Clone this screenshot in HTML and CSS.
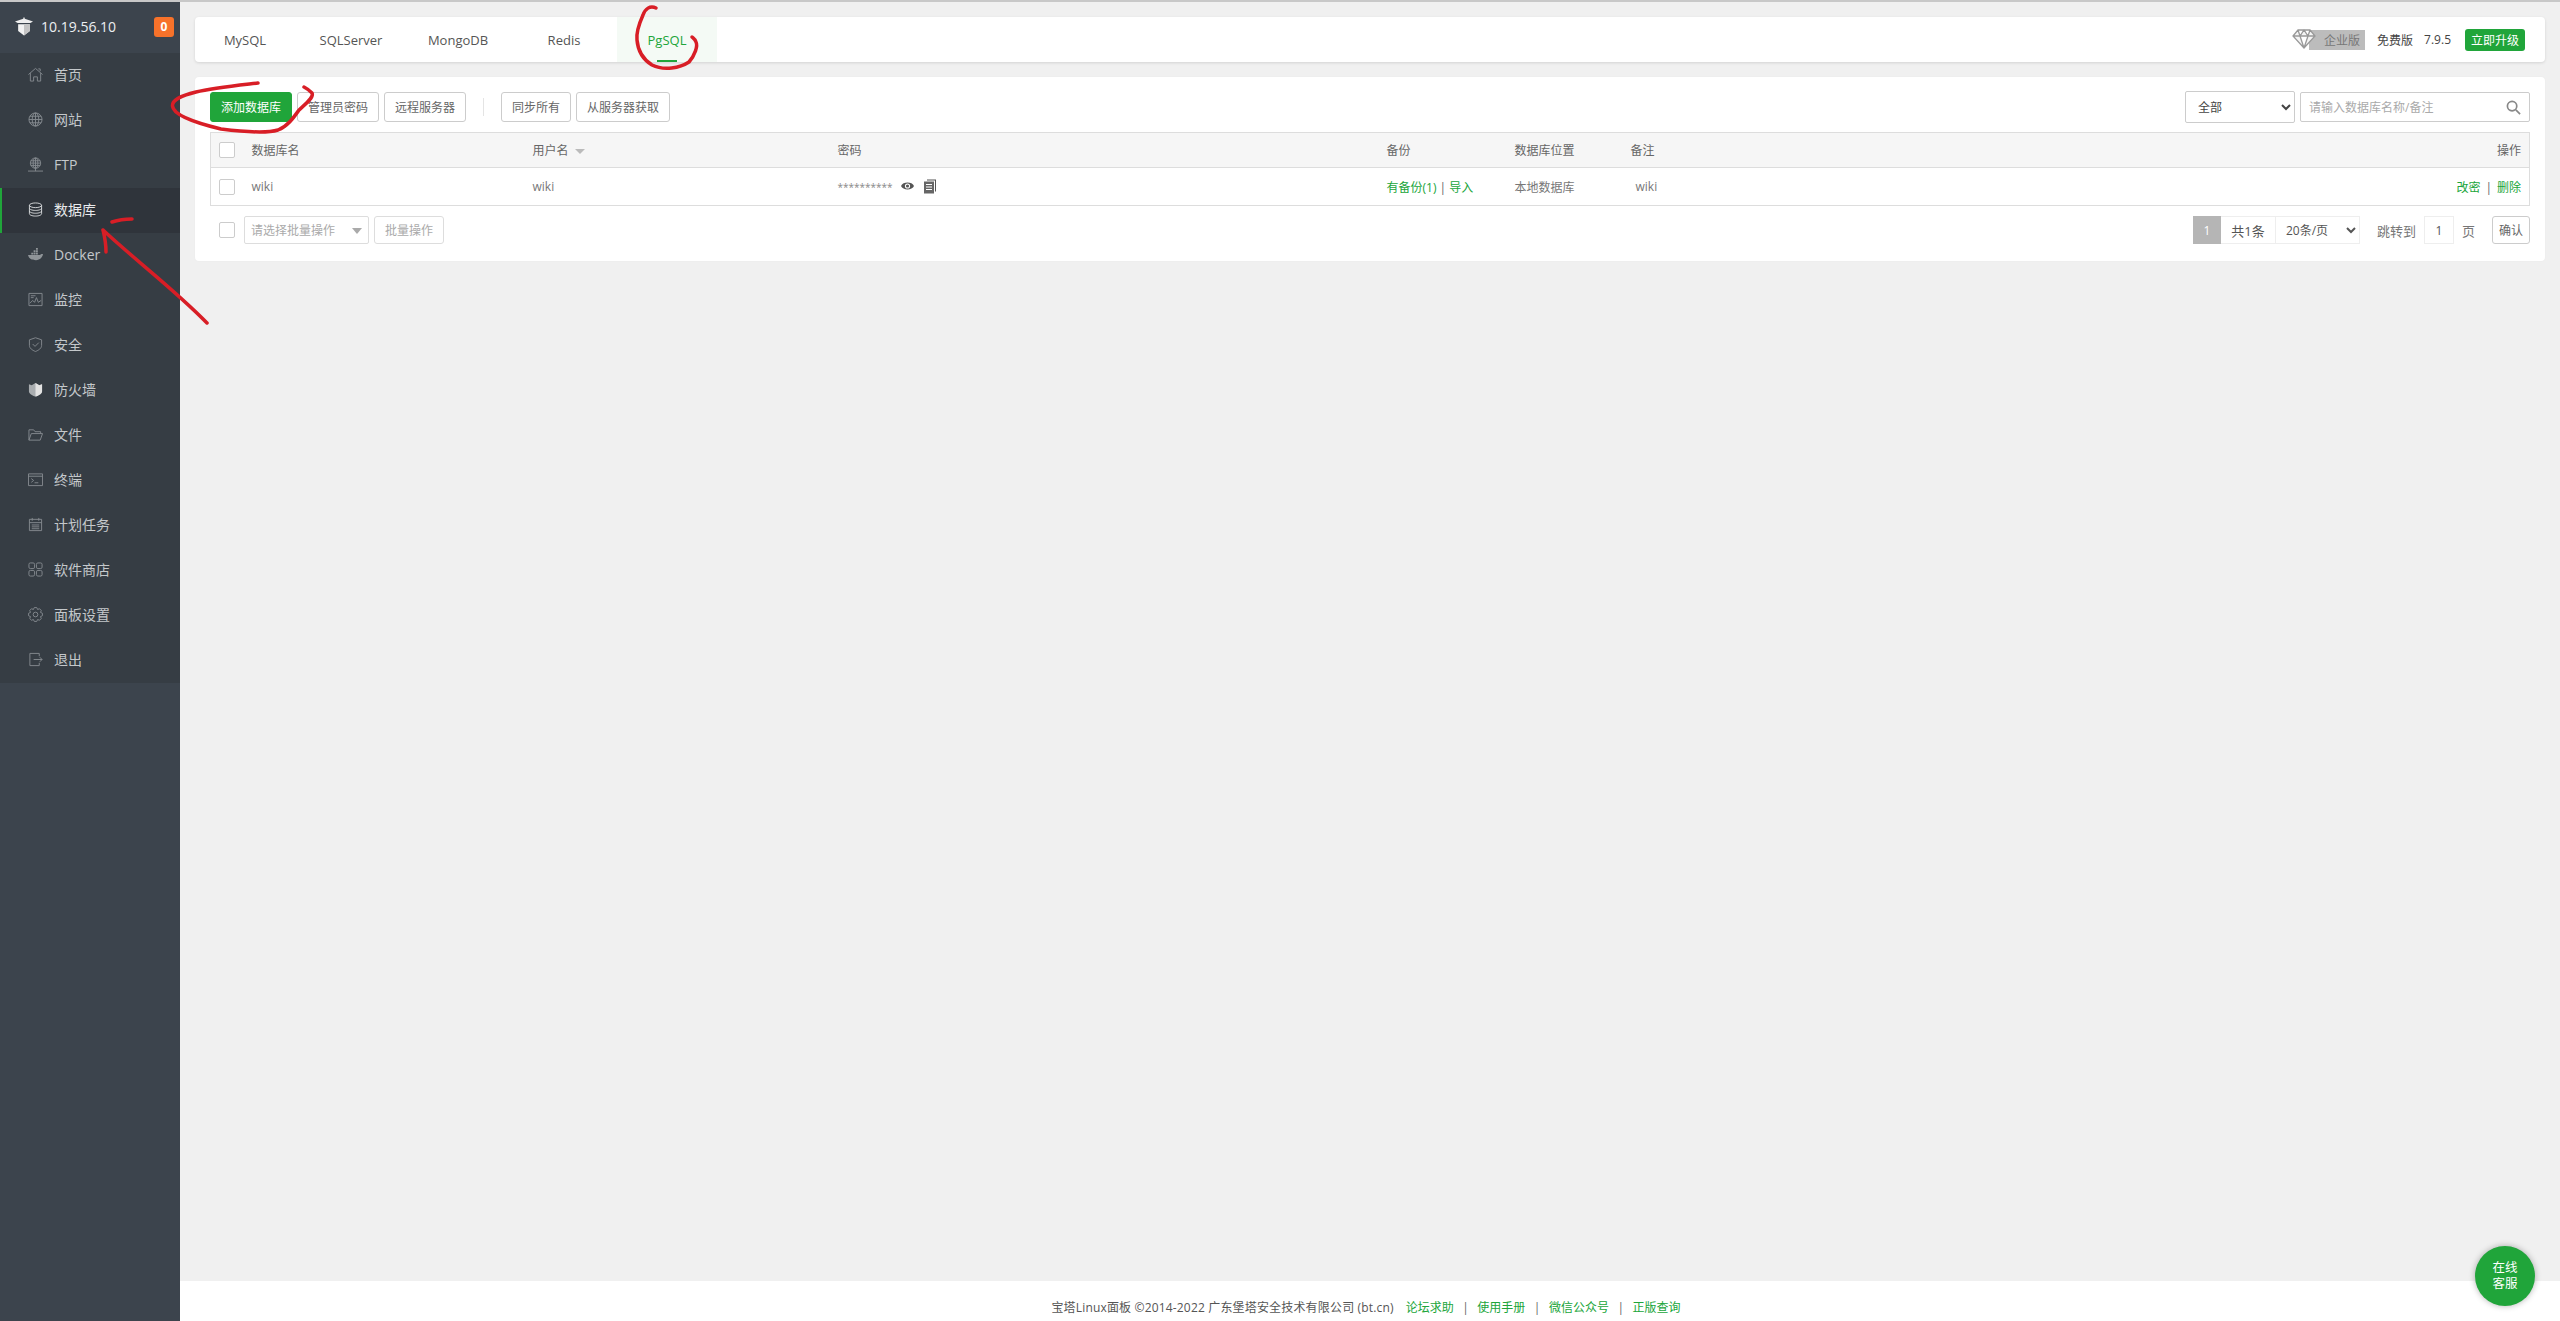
FILE: index.html
```html
<!DOCTYPE html>
<html lang="zh-CN">
<head>
<meta charset="utf-8">
<title>宝塔Linux面板</title>
<link rel="stylesheet" href="styles.css">
</head>
<body>
<div class="app">
  <aside class="sidebar">
    <div class="side-head">
      <svg class="logo" viewBox="0 0 20 20"><path d="M0 4.500 10 1l10 3.500-3 1.500H3z" fill="#eee"/><path d="M9.300 0h1.400v2H9.300z" fill="#eee"/><path d="M3.500 7.500h13V15L10 20l-6.500-5z" fill="#f2f2f2"/><path d="M10 7.500h6.500V15L10 20z" fill="#c4c4c4"/></svg>
      <span class="ip">10.19.56.10</span>
      <span class="badge">0</span>
    </div>
    <ul class="menu">
      <li class="item"><svg class="ico" viewBox="0 0 16 16"><path d="M.5 8 8 1.500 15.500 8M2.500 6.500V15H6v-4.500h4V15h3.500V6.500M11 2h2v2.500"/></svg><span>首页</span></li>
      <li class="item"><svg class="ico" viewBox="0 0 16 16"><circle cx="8" cy="8" r="7"/><ellipse cx="8" cy="8" rx="3.500" ry="7"/><path d="M1 8h14M2 4.500h12M2 11.500h12M8 1v14"/></svg><span>网站</span></li>
      <li class="item"><svg class="ico" viewBox="0 0 16 16"><circle cx="8" cy="6.500" r="5.500"/><ellipse cx="8" cy="6.500" rx="2.500" ry="5.500"/><path d="M2.500 6.500h11M3 4h10M3 9h10M8 1v14M0 15h16"/></svg><span>FTP</span></li>
      <li class="item active"><svg class="ico" viewBox="0 0 16 16"><ellipse cx="8" cy="3.500" rx="6.500" ry="2.500"/><path d="M1.500 3.500v9c0 1.400 2.900 2.500 6.500 2.500s6.500-1.100 6.500-2.500v-9M1.500 6.500C1.500 7.900 4.400 9 8 9s6.500-1.100 6.500-2.500M1.500 9.500C1.500 10.900 4.400 12 8 12s6.500-1.100 6.500-2.500"/></svg><span>数据库</span></li>
      <li class="item"><svg class="ico fill" viewBox="0 0 16 16"><path d="M0 8.500h13c.5-1 1.500-1.200 3-1-.5 3.500-3 6.500-7.500 6.500C4 14 1 12.500 0 8.500zM3.500 6h2v2h-2zM6 6h2v2H6zM8.500 6h2v2h-2zM6 3.500h2v2H6zM8.500 3.500h2v2h-2zM8.500 1h2v2h-2z"/></svg><span>Docker</span></li>
      <li class="item"><svg class="ico" viewBox="0 0 16 16"><path d="M1 1.500h14v13H1zM2 12l3-3 2 2 2-5 2 5 3-2M3 4h5M3 6h3"/></svg><span>监控</span></li>
      <li class="item"><svg class="ico" viewBox="0 0 16 16"><path d="M8 .8 14.500 3v6c0 3-3 5-6.500 6.500C4.500 14 1.500 12 1.500 9V3zM5 7.500l2.500 2.500L11.500 6"/></svg><span>安全</span></li>
      <li class="item"><svg class="ico shield" viewBox="0 0 16 16"><path d="M1 2.500 4 3.500 8 1l4 2.500 3-1V10c0 2-3.500 4.500-7 5.500C4.500 14.500 1 12 1 10z" fill="#a9adb0"/><path d="M8 1l4 2.500 3-1V10c0 2-3.500 4.500-7 5.500z" fill="#e2e2e2"/></svg><span>防火墙</span></li>
      <li class="item"><svg class="ico" viewBox="0 0 16 16"><path d="M1 14V3h5l1.500 2h6v2M1 14h12l2.500-7H3.500z"/></svg><span>文件</span></li>
      <li class="item"><svg class="ico" viewBox="0 0 16 16"><path d="M.5 2h15v12.500H.5zM.5 4.500h15M3.500 7l2.500 2-2.500 2M7 11.500h4"/></svg><span>终端</span></li>
      <li class="item"><svg class="ico" viewBox="0 0 16 16"><path d="M1.500 2.500h13v12h-13zM1.500 6h13M4.500 1v3M11.500 1v3M4 8.500h8M4 10.500h8M4 12.500h8"/></svg><span>计划任务</span></li>
      <li class="item"><svg class="ico" viewBox="0 0 16 16"><rect x="1" y="1" width="6" height="6" rx="1.500"/><rect x="9" y="1" width="6" height="6" rx="1.500"/><rect x="1" y="9" width="6" height="6" rx="1.500"/><rect x="9" y="9" width="6" height="6" rx="1.500"/></svg><span>软件商店</span></li>
      <li class="item"><svg class="ico" viewBox="0 0 16 16"><circle cx="8" cy="8" r="2.500"/><path d="M15.390 6.700V9.300L13.360 10.220 14.140 12.300 12.300 14.140 10.220 13.360 9.300 15.390H6.700L5.780 13.360 3.700 14.140 1.860 12.300 2.640 10.220 .61 9.300V6.700L2.640 5.780 1.860 3.700 3.700 1.860 5.780 2.640 6.700 .61H9.300L10.220 2.640 12.300 1.860 14.140 3.700 13.360 5.780z"/></svg><span>面板设置</span></li>
      <li class="item"><svg class="ico" viewBox="0 0 16 16"><path d="M12 4.500V1.500H2v13h10v-3M6 8h9M12.500 5.500 15 8l-2.500 2.500"/></svg><span>退出</span></li>
    </ul>
  </aside>

  <div class="main">
    <div class="content">
      <nav class="tabs">
        <a class="tab">MySQL</a>
        <a class="tab t-sql">SQLServer</a>
        <a class="tab t-mongo">MongoDB</a>
        <a class="tab t-redis">Redis</a>
        <a class="tab t-pg on">PgSQL</a>
        <div class="tabs-right">
          <span class="ent">
            <svg class="gem" viewBox="0 0 24 20"><path d="M6 1h12l5 6-11 12L1 7zM1 7h22M8 7l4 12 4-12M6 1l2 6 4-6 4 6 2-6"/></svg>
            <span class="ent-label">企业版</span>
          </span>
          <span class="free">免费版</span>
          <span class="ver">7.9.5</span>
          <span class="upgrade">立即升级</span>
        </div>
      </nav>

      <section class="card">
        <div class="toolbar">
          <button class="btn primary">添加数据库</button>
          <button class="btn">管理员密码</button>
          <button class="btn">远程服务器</button>
          <span class="sep"></span>
          <button class="btn">同步所有</button>
          <button class="btn">从服务器获取</button>
          <div class="tool-right">
            <select class="sel-all"><option>全部</option></select>
            <div class="search">
              <span class="ph">请输入数据库名称/备注</span>
              <svg class="lens" viewBox="0 0 16 16"><circle cx="6.500" cy="6.500" r="5"/><path d="M10.500 10.500 15 15"/></svg>
            </div>
          </div>
        </div>

        <table class="grid">
          <colgroup>
            <col class="c1"><col class="c2"><col class="c3"><col class="c4"><col class="c5"><col class="c6"><col class="c7"><col>
          </colgroup>
          <thead>
            <tr>
              <th><span class="check"></span></th>
              <th>数据库名</th>
              <th>用户名<span class="caret"></span></th>
              <th>密码</th>
              <th>备份</th>
              <th>数据库位置</th>
              <th>备注</th>
              <th class="right">操作</th>
            </tr>
          </thead>
          <tbody>
            <tr>
              <td><span class="check"></span></td>
              <td>wiki</td>
              <td>wiki</td>
              <td>
                <span class="stars">**********</span>
                <svg class="eye" viewBox="0 0 14 10"><path d="M0 5c2-5 12-5 14 0-2 5-12 5-14 0z" fill="#555"/><circle cx="7" cy="5" r="2.800" fill="#fff"/><circle cx="7" cy="5" r="1.700" fill="#555"/></svg>
                <svg class="copy" viewBox="0 0 12 14"><path d="M3 0h9v12h-1V1H3z" fill="#555"/><path d="M0 2h10v12H0z" fill="#666"/><path d="M2 5h6M2 7.500h6M2 10h6" stroke="#fff" stroke-width="1"/></svg>
              </td>
              <td class="link-cell"><a class="lnk">有备份(1)</a> <span class="pipe">|</span> <a class="lnk">导入</a></td>
              <td>本地数据库</td>
              <td class="note">wiki</td>
              <td class="right"><a class="lnk">改密</a><span class="pipe gap">|</span><a class="lnk">删除</a></td>
            </tr>
          </tbody>
        </table>

        <div class="bottom">
          <span class="check lone"></span>
          <div class="batch">请选择批量操作<span class="batch-caret"></span></div>
          <button class="btn ghost">批量操作</button>
          <div class="pager">
            <span class="cur">1</span>
            <span class="total">共1条</span>
            <select class="sel-size"><option>20条/页</option></select>
            <span class="jump">跳转到</span>
            <span class="pg-in">1</span>
            <span class="pg-unit">页</span>
            <button class="btn ok">确认</button>
          </div>
        </div>
      </section>
    </div>

    <footer class="foot">
      <span class="copyright">宝塔Linux面板 ©2014-2022 广东堡塔安全技术有限公司 (bt.cn)</span>
      <a class="lnk first">论坛求助</a><span class="pipe">|</span>
      <a class="lnk">使用手册</a><span class="pipe">|</span>
      <a class="lnk">微信公众号</a><span class="pipe">|</span>
      <a class="lnk">正版查询</a>
    </footer>
  </div>
</div>

<div class="chat">在线<br>客服</div>

<svg class="marks" viewBox="0 0 2560 1321">
  <path d="M258 83C232 86 212 88 196 92 180 96 172 100 172.500 106 173 114 192 122 221 129 245 132 268 133 278 130 288 126 294 117 299 110 307 103 314 97 312 93 309 90 306 88 304 87"/>
  <path d="M656 8C650 5 645 9 643 15 639 24 636 32 637 40 638 52 644 60 652 65 664 71 680 68 689 62 695 55 698 46 696 42 695 39 693 38 692 37"/>
  <path d="M207 323C175 290 135 260 103 230M103 230C105 238 106 245 106 252M112 222C118 220 125 219 132 219"/>
</svg>
</body>
</html>
```

FILE: styles.css
```css
* { box-sizing: border-box; }
html, body { margin: 0; height: 100%; overflow: hidden; }
body {
  font-family: "Open Sans", "Noto Sans CJK SC", sans-serif;
  font-size: 12px;
  color: #666;
  background: #f0f0f0;
  border-top: 2px solid #c8c8c8;
  position: relative;
}
.app { display: flex; height: 100%; }

/* sidebar */
.sidebar { width: 180px; flex: none; background: #3c444d; }
.side-head { height: 51px; display: flex; align-items: center; padding: 0 6px 2px 15px; }
.logo { width: 18px; height: 19px; flex: none; }
.ip { margin-left: 8px; font-size: 14px; color: #eceff1; }
.badge {
  margin-left: auto; width: 20px; height: 20px; border-radius: 3px;
  background: #f7722a; color: #fff; font-size: 12px; font-weight: 700;
  display: flex; align-items: center; justify-content: center;
}
.menu { list-style: none; margin: 0; padding: 0; background: #363d44; }
.item {
  height: 45px; display: flex; align-items: center; padding: 0 0 3px 28px;
  font-size: 14px; color: #c4c8cb; gap: 11px;
}
.item.active { background: #2f343b; box-shadow: inset 2px 0 0 #20a53a; color: #e8eaec; }
.ico { width: 15px; height: 15px; fill: none; stroke: #848a8f; stroke-width: 1; flex: none; }
.item.active .ico { stroke: #d8dadc; }
.ico.fill { fill: #8f9498; stroke: none; }
.ico.shield { stroke: none; }

/* main */
.main { flex: 1; min-width: 0; display: flex; flex-direction: column; }
.content { flex: 1; padding: 15px 15px 0 15px; }
.tabs {
  height: 45px; background: #fff; border-radius: 4px; display: flex; align-items: stretch;
  box-shadow: 0 1px 3px rgba(0,0,0,.12); font-size: 13px; color: #555;
}
.tab { width: 100px; display: flex; align-items: center; justify-content: center; position: relative; }
.t-sql { margin-left: 6px; }
.t-mongo { margin-left: 7px; }
.t-redis { margin-left: 6px; }
.t-pg { margin-left: 3px; }
.tab.on { background: #f4faf5; color: #20a53a; }
.tab.on::after {
  content: ""; position: absolute; left: 40px; bottom: 0; width: 20px; height: 2px; background: #20a53a;
}
.tabs-right { margin-left: auto; display: flex; align-items: center; padding-right: 20px; font-size: 12px; color: #444; }
.ent { display: flex; align-items: center; position: relative; width: 73px; height: 21px; }
.gem { width: 24px; height: 20px; fill: #f4f4f4; stroke: #999; stroke-width: 1.300; position: absolute; left: 0; top: 0; z-index: 1; }
.ent-label {
  margin-left: 17px; width: 56px; height: 20px; background: #bcbcbc; color: #777;
  display: flex; align-items: center; justify-content: flex-end; padding-right: 5px;
}
.free { margin-left: 12px; }
.ver { margin-left: 11px; }
.upgrade {
  margin-left: 14px; width: 60px; height: 22px; background: #20a53a; color: #fff; border-radius: 3px;
  display: flex; align-items: center; justify-content: center;
}

/* card */
.card { margin-top: 15px; height: 184px; background: #fff; border-radius: 4px; padding: 15px 15px 0; box-shadow: 0 0 2px rgba(0,0,0,.04); }
.toolbar { display: flex; align-items: center; gap: 5px; height: 30px; }
.btn {
  font: inherit; color: #666; background: #fff; border: 1px solid #ccc; border-radius: 3px;
  height: 30px; padding: 0 10px; white-space: nowrap;
}
.btn.primary { background: #20a53a; border-color: #20a53a; color: #fff; }
.sep { width: 1px; height: 18px; background: #e4e4e4; margin: 0 12px; }
.tool-right { margin-left: auto; display: flex; align-items: center; gap: 5px; }
.sel-all {
  width: 110px; height: 32px; font: inherit; color: #444; background: #fff;
  border: 1px solid #ccc; border-radius: 2px; padding-left: 8px;
}
.search {
  width: 230px; height: 30px; border: 1px solid #ccc; border-radius: 2px; padding: 0 8px;
  display: flex; align-items: center; justify-content: space-between;
}
.ph { color: #aaa; }
.lens { width: 15px; height: 15px; fill: none; stroke: #888; stroke-width: 1.800; }

/* table */
.grid { margin-top: 10px; width: 100%; border-collapse: collapse; table-layout: fixed; border: 1px solid #ddd; }
.c1 { width: 33px; } .c2 { width: 281px; } .c3 { width: 305px; } .c4 { width: 549px; }
.c5 { width: 128px; } .c6 { width: 116px; } .c7 { width: 300px; }
th { height: 35px; background: #f6f6f6; font-weight: 400; text-align: left; padding: 0 8px; border-bottom: 1px solid #ddd; color: #666; }
td { height: 38px; padding: 0 8px; color: #777; }
.right { text-align: right; }
.check { display: block; width: 16px; height: 16px; background: #fff; border: 1px solid #ccc; border-radius: 2px; }
.caret { display: inline-block; margin-left: 6px; vertical-align: middle; border: 5px solid transparent; border-top: 5px solid #bbb; border-bottom: 0; }
.stars { color: #888; font-size: 10px; }
.eye { width: 13px; height: 10px; margin-left: 5px; }
.copy { width: 12px; height: 15px; margin-left: 7px; vertical-align: -3px; }
.lnk { color: #20a53a; }
.pipe { color: #666; }
.gap { margin: 0 5px; }
.note { padding-left: 13px; }

/* bottom row */
.bottom { display: flex; align-items: center; margin-top: 10px; height: 28px; padding-left: 9px; }
.check.lone { flex: none; }
.batch {
  margin-left: 9px; width: 125px; height: 28px; border: 1px solid #ddd; border-radius: 2px; color: #aaa;
  display: flex; align-items: center; padding-left: 6px; position: relative;
}
.batch-caret { position: absolute; right: 6px; top: 11px; border: 5px solid transparent; border-top: 6px solid #aaa; border-bottom: 0; }
.btn.ghost { margin-left: 5px; height: 28px; width: 70px; padding: 0; color: #aaa; border-color: #ddd; }
.pager { margin-left: auto; display: flex; align-items: center; height: 28px; color: #555; }
.cur { width: 28px; height: 28px; background: #b5b5b5; color: #fff; display: flex; align-items: center; justify-content: center; }
.total { width: 55px; height: 28px; border: 1px solid #eee; border-width: 1px 1px 1px 0; display: flex; align-items: center; justify-content: center; font-size: 13px; }
.sel-size { width: 84px; height: 28px; font: inherit; color: #555; background: #fff; border: 1px solid #eee; border-left: 0; padding-left: 6px; }
.jump { margin-left: 17px; color: #777; font-size: 13px; }
.pg-in { margin-left: 8px; width: 30px; height: 28px; border: 1px solid #eee; display: flex; align-items: center; justify-content: center; }
.pg-unit { margin-left: 8px; color: #777; font-size: 13px; }
.btn.ok { margin-left: 17px; height: 28px; width: 38px; padding: 0; }

/* footer */
.foot {
  height: 40px; flex: none; background: #fff; display: flex; align-items: center; justify-content: center;
  padding: 12px 8px 0 0; color: #555; font-size: 12px;
}
.copyright { letter-spacing: .17px; }
.foot .pipe { margin: 0 8.500px; }
.foot .first { margin-left: 12px; }

/* floats */
.chat {
  position: absolute; left: 2475px; top: 1244px; width: 60px; height: 60px; border-radius: 50%;
  background: #20a53a; color: #fff; font-size: 12.500px; line-height: 16px;
  display: flex; align-items: center; justify-content: center; text-align: center;
  box-shadow: 0 0 6px rgba(0,0,0,.3);
}
.marks {
  position: absolute; left: 0; top: -2px; width: 2560px; height: 1321px; pointer-events: none;
  fill: none; stroke: #d81e26; stroke-width: 3.500; stroke-linecap: round; stroke-linejoin: round;
}
```
